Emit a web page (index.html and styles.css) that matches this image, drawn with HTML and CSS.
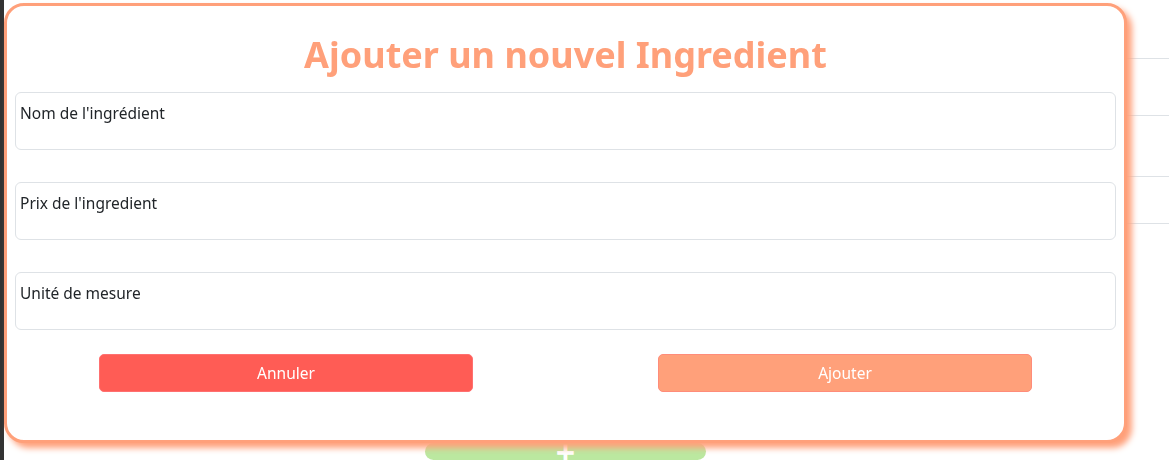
FILE: index.html
```html
<!DOCTYPE html>
<html lang="fr">

<head>
    <meta charset="UTF-8">
    <meta name="viewport" content="width=device-width, initial-scale=1.0">
    <title>Ingredients</title>
    <link rel="stylesheet" href="styles.css">
</head>

<body>
    <div class="page">
        <div class="sidebar"></div>
        <main class="main">
            <table class="list">
                <tr><td></td></tr>
                <tr><td></td></tr>
                <tr><td></td></tr>
                <tr><td></td></tr>
            </table>
            <button class="add-btn" type="button">+</button>
        </main>
    </div>

    <div class="modal">
        <h1 class="modal-title">Ajouter un nouvel Ingredient</h1>
        <form class="modal-form">
            <div class="field"><label for="nom">Nom de l'ingrédient</label><input id="nom" type="text"></div>
            <div class="field"><label for="prix">Prix de l'ingredient</label><input id="prix" type="text"></div>
            <div class="field"><label for="unite">Unité de mesure</label><input id="unite" type="text"></div>
            <div class="actions">
                <button type="button" class="btn btn-cancel">Annuler</button>
                <button type="button" class="btn btn-add">Ajouter</button>
            </div>
        </form>
    </div>
</body>

</html>
```

FILE: styles.css
```css
body {
    margin: 0;
    font-family: "Noto Sans", "Open Sans", sans-serif;
    background: #ffffff;
    color: #212529;
}

.page {
    display: flex;
    height: 460px;
    overflow: hidden;
}

.sidebar {
    width: 4px;
    background: #333333;
}

.main {
    flex: 1;
    display: flex;
    flex-direction: column;
    align-items: flex-start;
    padding-left: 421px;
}

.list {
    border-collapse: collapse;
    width: 744px;
    margin-top: 58px;
}

.list td {
    border-top: 1px solid #dee2e6;
    height: 56px;
    padding: 0;
}

.list tr:nth-child(2) td {
    height: 60px;
}

.list tr:nth-child(3) td {
    height: 46px;
}

.add-btn {
    margin-top: 163px;
    width: 281px;
    height: 40px;
    border: none;
    border-radius: 10px;
    background: #bbe8a0;
    color: #ffffff;
    font-size: 34px;
    font-weight: bold;
    line-height: 14px;
    padding: 0;
    font-family: "Noto Sans", sans-serif;
}

.modal {
    position: fixed;
    top: 3px;
    left: 4px;
    width: 1101px;
    padding: 0 8px 48px 8px;
    background: #ffffff;
    border: 3px solid #ffa07a;
    border-radius: 20px;
    box-shadow: 5px 5px 6px #ffa07a;
}

.modal-title {
    margin: 25px 0 13px 0;
    text-align: center;
    font-size: 36px;
    line-height: 48px;
    font-weight: bold;
    color: #ffa07a;
}

.modal-form {
    display: flex;
    flex-direction: column;
    gap: 32px;
}

.field {
    position: relative;
    height: 56px;
    border: 1px solid #dee2e6;
    border-radius: 6px;
}

.field label {
    position: absolute;
    top: 10px;
    left: 4px;
    font-size: 15.5px;
    line-height: 20px;
}

.field input {
    width: 100%;
    height: 100%;
    border: none;
    background: transparent;
    box-sizing: border-box;
    outline: none;
}

.actions {
    display: flex;
    gap: 185px;
    padding-left: 84px;
    margin-top: -8px;
}

.btn {
    width: 374px;
    height: 38px;
    border-radius: 5px;
    color: #ffffff;
    font-size: 15.5px;
    font-family: "Noto Sans", sans-serif;
    cursor: pointer;
}

.btn-cancel {
    background: #ff5c55;
    border: 1px solid #ff7070;
}

.btn-add {
    background: #ffa07a;
    border: 1px solid #ff8c7a;
}
```
